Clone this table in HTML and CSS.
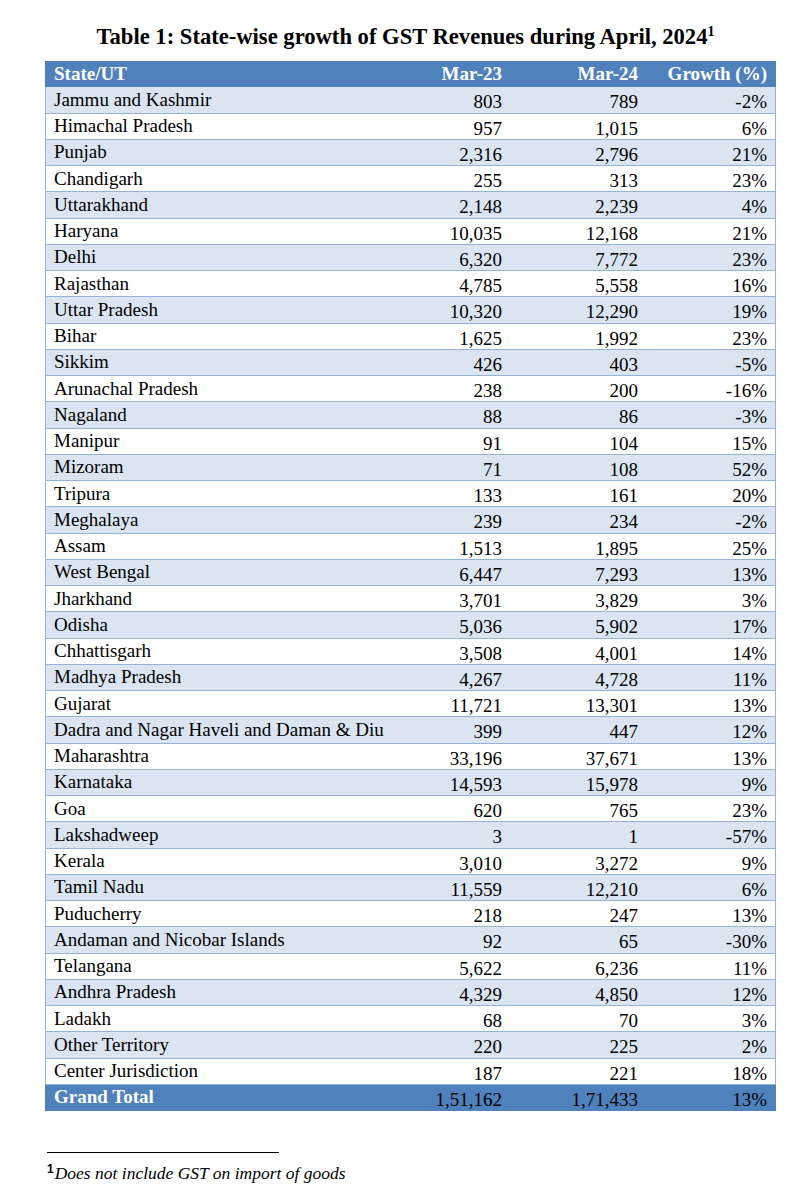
FILE: index.html
```html
<!DOCTYPE html>
<html lang="en">
<head>
<meta charset="utf-8">
<title>State-wise growth of GST Revenues</title>
<link rel="stylesheet" href="styles.css">
</head>
<body>
<div class="page">
  <h1 class="title">Table 1: State-wise growth of GST Revenues during April, 2024<sup>1</sup></h1>
  <div class="table">
    <div class="row head">
      <div class="c name">State/UT</div>
      <div class="c num">Mar-23</div>
      <div class="c num">Mar-24</div>
      <div class="c num">Growth (%)</div>
    </div>
    <div class="row alt"><div class="c name">Jammu and Kashmir</div><div class="c num">803</div><div class="c num">789</div><div class="c num">-2%</div></div>
    <div class="row"><div class="c name">Himachal Pradesh</div><div class="c num">957</div><div class="c num">1,015</div><div class="c num">6%</div></div>
    <div class="row alt"><div class="c name">Punjab</div><div class="c num">2,316</div><div class="c num">2,796</div><div class="c num">21%</div></div>
    <div class="row"><div class="c name">Chandigarh</div><div class="c num">255</div><div class="c num">313</div><div class="c num">23%</div></div>
    <div class="row alt"><div class="c name">Uttarakhand</div><div class="c num">2,148</div><div class="c num">2,239</div><div class="c num">4%</div></div>
    <div class="row"><div class="c name">Haryana</div><div class="c num">10,035</div><div class="c num">12,168</div><div class="c num">21%</div></div>
    <div class="row alt"><div class="c name">Delhi</div><div class="c num">6,320</div><div class="c num">7,772</div><div class="c num">23%</div></div>
    <div class="row"><div class="c name">Rajasthan</div><div class="c num">4,785</div><div class="c num">5,558</div><div class="c num">16%</div></div>
    <div class="row alt"><div class="c name">Uttar Pradesh</div><div class="c num">10,320</div><div class="c num">12,290</div><div class="c num">19%</div></div>
    <div class="row"><div class="c name">Bihar</div><div class="c num">1,625</div><div class="c num">1,992</div><div class="c num">23%</div></div>
    <div class="row alt"><div class="c name">Sikkim</div><div class="c num">426</div><div class="c num">403</div><div class="c num">-5%</div></div>
    <div class="row"><div class="c name">Arunachal Pradesh</div><div class="c num">238</div><div class="c num">200</div><div class="c num">-16%</div></div>
    <div class="row alt"><div class="c name">Nagaland</div><div class="c num">88</div><div class="c num">86</div><div class="c num">-3%</div></div>
    <div class="row"><div class="c name">Manipur</div><div class="c num">91</div><div class="c num">104</div><div class="c num">15%</div></div>
    <div class="row alt"><div class="c name">Mizoram</div><div class="c num">71</div><div class="c num">108</div><div class="c num">52%</div></div>
    <div class="row"><div class="c name">Tripura</div><div class="c num">133</div><div class="c num">161</div><div class="c num">20%</div></div>
    <div class="row alt"><div class="c name">Meghalaya</div><div class="c num">239</div><div class="c num">234</div><div class="c num">-2%</div></div>
    <div class="row"><div class="c name">Assam</div><div class="c num">1,513</div><div class="c num">1,895</div><div class="c num">25%</div></div>
    <div class="row alt"><div class="c name">West Bengal</div><div class="c num">6,447</div><div class="c num">7,293</div><div class="c num">13%</div></div>
    <div class="row"><div class="c name">Jharkhand</div><div class="c num">3,701</div><div class="c num">3,829</div><div class="c num">3%</div></div>
    <div class="row alt"><div class="c name">Odisha</div><div class="c num">5,036</div><div class="c num">5,902</div><div class="c num">17%</div></div>
    <div class="row"><div class="c name">Chhattisgarh</div><div class="c num">3,508</div><div class="c num">4,001</div><div class="c num">14%</div></div>
    <div class="row alt"><div class="c name">Madhya Pradesh</div><div class="c num">4,267</div><div class="c num">4,728</div><div class="c num">11%</div></div>
    <div class="row"><div class="c name">Gujarat</div><div class="c num">11,721</div><div class="c num">13,301</div><div class="c num">13%</div></div>
    <div class="row alt"><div class="c name">Dadra and Nagar Haveli and Daman &amp; Diu</div><div class="c num">399</div><div class="c num">447</div><div class="c num">12%</div></div>
    <div class="row"><div class="c name">Maharashtra</div><div class="c num">33,196</div><div class="c num">37,671</div><div class="c num">13%</div></div>
    <div class="row alt"><div class="c name">Karnataka</div><div class="c num">14,593</div><div class="c num">15,978</div><div class="c num">9%</div></div>
    <div class="row"><div class="c name">Goa</div><div class="c num">620</div><div class="c num">765</div><div class="c num">23%</div></div>
    <div class="row alt"><div class="c name">Lakshadweep</div><div class="c num">3</div><div class="c num">1</div><div class="c num">-57%</div></div>
    <div class="row"><div class="c name">Kerala</div><div class="c num">3,010</div><div class="c num">3,272</div><div class="c num">9%</div></div>
    <div class="row alt"><div class="c name">Tamil Nadu</div><div class="c num">11,559</div><div class="c num">12,210</div><div class="c num">6%</div></div>
    <div class="row"><div class="c name">Puducherry</div><div class="c num">218</div><div class="c num">247</div><div class="c num">13%</div></div>
    <div class="row alt"><div class="c name">Andaman and Nicobar Islands</div><div class="c num">92</div><div class="c num">65</div><div class="c num">-30%</div></div>
    <div class="row"><div class="c name">Telangana</div><div class="c num">5,622</div><div class="c num">6,236</div><div class="c num">11%</div></div>
    <div class="row alt"><div class="c name">Andhra Pradesh</div><div class="c num">4,329</div><div class="c num">4,850</div><div class="c num">12%</div></div>
    <div class="row"><div class="c name">Ladakh</div><div class="c num">68</div><div class="c num">70</div><div class="c num">3%</div></div>
    <div class="row alt"><div class="c name">Other Territory</div><div class="c num">220</div><div class="c num">225</div><div class="c num">2%</div></div>
    <div class="row"><div class="c name">Center Jurisdiction</div><div class="c num">187</div><div class="c num">221</div><div class="c num">18%</div></div>
    <div class="row total"><div class="c name">Grand Total</div><div class="c num">1,51,162</div><div class="c num">1,71,433</div><div class="c num">13%</div></div>
  </div>
  <div class="footnote">
    <div class="rule"></div>
    <p class="note"><sup>1</sup>Does not include GST on import of goods</p>
  </div>
</div>
</body>
</html>
```
FILE: styles.css
```css
html, body {
  margin: 0;
  padding: 0;
  background: #ffffff;
}
.page {
  width: 811px;
  padding-top: 24px;
  font-family: "Liberation Serif", "Times New Roman", serif;
  color: #000000;
}
.title {
  margin: 0 0 11px 0;
  font-size: 22.6px;
  line-height: 26px;
  font-weight: bold;
  text-align: center;
}
.title sup {
  font-size: 14px;
  line-height: 0;
  vertical-align: 8px;
}
.table {
  margin-left: 45px;
  width: 731px;
  font-size: 19px;
}
.row {
  display: grid;
  grid-template-columns: 340px 125px 136px 128px;
  height: 26.25px;
  box-sizing: border-box;
  border-left: 1px solid #95b3d7;
  border-right: 1px solid #95b3d7;
  border-bottom: 1px solid #95b3d7;
  background: #ffffff;
}
.row.alt {
  background: #dbe5f1;
}
.row.head, .row.total {
  background: #4f81bd;
  border-color: #4f81bd;
}
.head .c, .total .name {
  color: #ffffff;
  font-weight: bold;
}
.c {
  line-height: 21px;
  white-space: nowrap;
  overflow: hidden;
}
.name {
  padding: 1.5px 0 0 8px;
}
.num {
  text-align: right;
  padding: 4px 9px 0 0;
}
.head .num {
  padding-top: 2px;
}
.row .num:last-child {
  padding-right: 8px;
}
.footnote {
  margin: 41px 0 0 47px;
}
.rule {
  width: 232px;
  height: 1px;
  background: #000000;
}
.note {
  margin: 9px 0 0 0;
  font-size: 17.5px;
  line-height: 22px;
  font-style: italic;
}
.note sup {
  font-family: "Liberation Sans", Arial, sans-serif;
  font-style: normal;
  font-weight: bold;
  font-size: 12px;
  line-height: 0;
  vertical-align: 6px;
  margin-right: 1px;
}
```
